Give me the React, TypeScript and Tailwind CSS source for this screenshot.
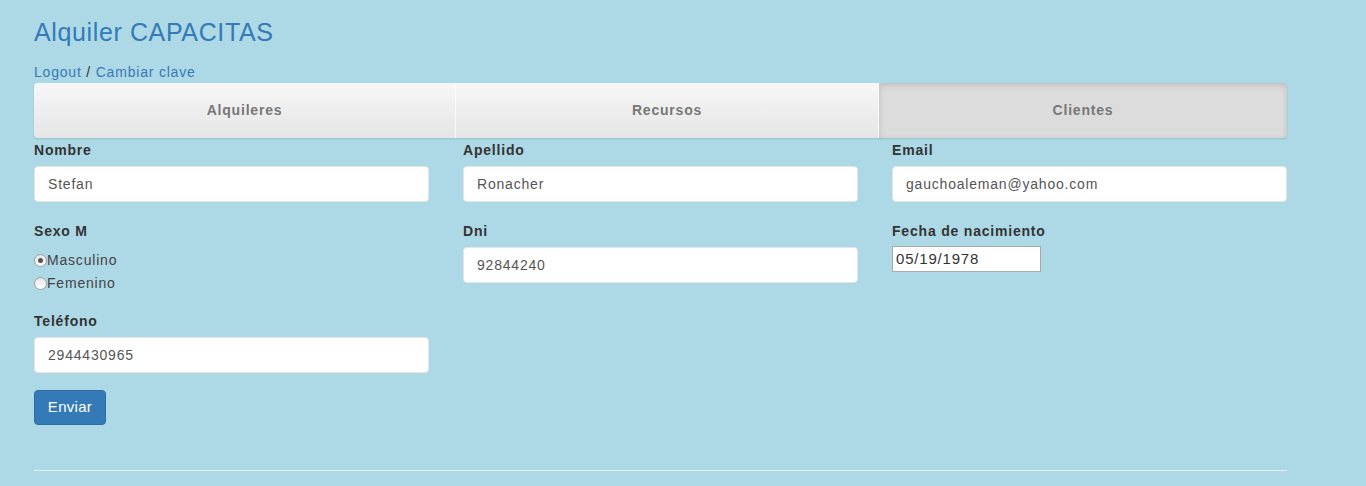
import React from "react";

const font = { fontFamily: '"Liberation Sans", Arial, Helvetica, sans-serif' };

function Label({ children }: { children: React.ReactNode }) {
  return <div className="mb-[6px] text-[14px] leading-[20px] font-bold text-[#333]">{children}</div>;
}

function Input({ value }: { value: string }) {
  return (
    <div className="h-[36px] rounded-[4px] border border-[#e4e4e4] bg-white pl-[13px] flex items-center text-[14px] text-[#555]">
      {value}
    </div>
  );
}

function Field({ label, value }: { label: string; value: string }) {
  return (
    <div className="mb-[19px]">
      <Label>{label}</Label>
      <Input value={value} />
    </div>
  );
}

function Radio({ checked, label }: { checked?: boolean; label: string }) {
  return (
    <div className="flex items-center h-[23px] text-[14px] text-[#444]">
      <span className="w-[13px] h-[13px] rounded-full border border-[#a0a0a0] bg-gradient-to-b from-[#e6e6e6] to-[#ffffff] flex items-center justify-center">
        {checked && <span className="w-[5px] h-[5px] rounded-full bg-[#555]" />}
      </span>
      <span>{label}</span>
    </div>
  );
}

export default function App() {
  return (
    <div className="min-h-screen bg-[#add8e6] tracking-[0.05em]" style={font}>
      <div className="ml-[34px] w-[1253px]">
        <h1 className="pt-[19px] text-[25px] leading-[27px] tracking-[0.025em] text-[#337ab7] font-normal">Alquiler CAPACITAS</h1>
        <div className="mt-[16px] text-[14px] leading-[20px] text-[#333]">
          <a className="text-[#337ab7]">Logout</a> / <a className="text-[#337ab7]">Cambiar clave</a>
        </div>
        <div className="mt-[1px] mb-[2px] flex h-[55px] rounded-[4px] shadow-[0_1px_2px_rgba(0,0,0,0.12)] overflow-hidden text-[14px] font-bold text-[#777]">
          <div className="w-[422px] flex items-center justify-center bg-gradient-to-b from-[#f7f7f7] to-[#e5e5e5] border-r border-[#fafafa]">Alquileres</div>
          <div className="w-[423px] flex items-center justify-center bg-gradient-to-b from-[#f7f7f7] to-[#e5e5e5] border-r border-[#fafafa]">Recursos</div>
          <div className="flex-1 flex items-center justify-center bg-[#dcdcdc] rounded-[4px] shadow-[inset_0_2px_6px_rgba(0,0,0,0.15)]">Clientes</div>
        </div>
        <div className="grid grid-cols-3 gap-x-[34px]">
          <div>
            <Field label="Nombre" value="Stefan" />
            <div className="mb-[8px] text-[14px] leading-[20px] font-bold text-[#333]">Sexo M</div>
            <div>
              <Radio checked label="Masculino" />
              <Radio label="Femenino" />
            </div>
            <div className="mt-[16px]">
              <Label>Teléfono</Label>
              <Input value="2944430965" />
            </div>
            <button className="mt-[17px] h-[35px] w-[72px] rounded-[4px] bg-[#337ab7] border border-[#2e6da4] text-white text-[15px] tracking-[0.02em]">Enviar</button>
          </div>
          <div>
            <Field label="Apellido" value="Ronacher" />
            <Field label="Dni" value="92844240" />
          </div>
          <div>
            <Field label="Email" value="gauchoaleman@yahoo.com" />
            <div className="mb-[5px] text-[14px] leading-[20px] font-bold text-[#333]">Fecha de nacimiento</div>
            <div className="w-[149px] h-[26px] border border-[#a9a9a9] bg-white pl-[3px] flex items-center text-[15px] text-[#333]">05/19/1978</div>
          </div>
        </div>
        <div className="mt-[45px] h-px bg-[#e6f2f6]" />
      </div>
    </div>
  );
}
